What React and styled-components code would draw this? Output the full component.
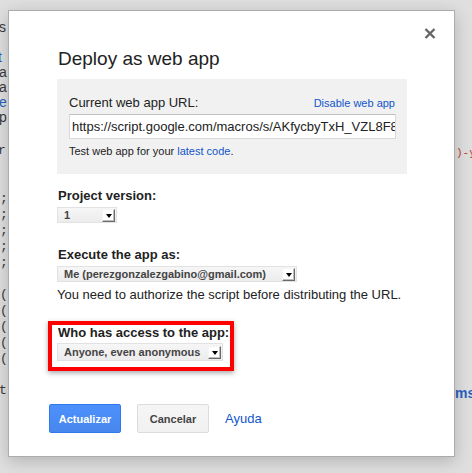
import React from "react";
import styled, { createGlobalStyle } from "styled-components";

const Global = createGlobalStyle`
  html, body { margin: 0; padding: 0; }
  body { background: #dedede; font-family: "Liberation Sans", Arial, sans-serif; }
`;

const Page = styled.div`
  position: relative;
  width: 472px;
  height: 473px;
  overflow: hidden;
  background: #dfdfdf;
`;

const Backdrop = styled.div`
  display: grid;
  grid-template-columns: 12px 1fr 20px;
  height: 100%;
`;

const Strip = styled.div`
  display: flex;
  flex-direction: column;
  padding-top: ${(p) => p.$top}px;
  overflow: hidden;
  white-space: pre;
`;

const Section = styled.div`
  display: flex;
  flex-direction: column;
  margin-top: ${(p) => p.$gap || 0}px;
`;

const Line = styled.div`
  height: ${(p) => (p.$mono ? 16 : 15)}px;
  line-height: ${(p) => (p.$mono ? 16 : 15)}px;
  font-family: ${(p) =>
    p.$mono ? '"Liberation Mono", "DejaVu Sans Mono", monospace' : '"Liberation Sans", Arial, sans-serif'};
  font-size: ${(p) => p.$size || (p.$mono ? 13 : 14)}px;
  font-weight: ${(p) => (p.$bold ? 700 : 400)};
  color: ${(p) => p.$color || "#3a3a3a"};
  margin-left: ${(p) => p.$shift || 0}px;
`;

const Blue = styled.span`
  color: #2a62c0;
`;

const Dialog = styled.div`
  position: absolute;
  left: 8px;
  top: 10px;
  width: 447px;
  height: 447px;
  box-sizing: border-box;
  background: #fff;
  border: 1px solid #acacac;
  box-shadow: 0 4px 16px rgba(0, 0, 0, 0.2);
  padding: 37px 47px 0 48px;
  display: flex;
  flex-direction: column;
  color: #222;
  & > * { flex-shrink: 0; }
`;

const Close = styled.button`
  position: absolute;
  right: 18px;
  top: 16px;
  width: 13px;
  height: 13px;
  padding: 0;
  border: 0;
  background: none;
  display: flex;
  align-items: center;
  justify-content: center;
  cursor: pointer;
`;

const Title = styled.h1`
  margin: 0;
  font-size: 19px;
  line-height: 22px;
  font-weight: 400;
  color: #222;
  padding-left: 1px;
`;

const InfoBox = styled.div`
  margin-top: 9px;
  background: #f1f1f1;
  height: 95px;
  box-sizing: border-box;
  padding: 16px 11px 0 12px;
  display: flex;
  flex-direction: column;
`;

const HeadRow = styled.div`
  display: flex;
  justify-content: space-between;
  align-items: baseline;
  padding-right: 1px;
`;

const Label = styled.div`
  font-size: 13px;
  line-height: 15px;
  color: #222;
`;

const SmallLink = styled.a`
  font-size: 11px;
  color: #15c;
  text-decoration: none;
`;

const UrlInput = styled.div`
  margin-top: 4px;
  height: 25px;
  box-sizing: border-box;
  border: 1px solid #d9d9d9;
  border-top-color: #c0c0c0;
  background: #fff;
  font-size: 13px;
  line-height: 23px;
  padding: 0 2px;
  white-space: nowrap;
  overflow: hidden;
  color: #222;
`;

const Note = styled.div`
  margin-top: 6px;
  font-size: 11px;
  line-height: 13px;
  color: #222;
  a { color: #15c; text-decoration: none; }
`;

const Field = styled.div`
  display: flex;
  flex-direction: column;
  align-items: flex-start;
  margin-top: ${(p) => p.$gap}px;
`;

const FieldLabel = styled.div`
  font-size: 13px;
  line-height: 15px;
  font-weight: 700;
  color: #222;
  padding-left: 1px;
  white-space: nowrap;
`;

const Select = styled.div`
  margin-top: ${(p) => p.$gap || 6}px;
  width: ${(p) => p.$w}px;
  height: ${(p) => p.$h || 16}px;
  box-sizing: border-box;
  border: 1px solid #e2e2e2;
  background: linear-gradient(#f6f6f6, #ececec);
  display: flex;
  align-items: center;
  justify-content: space-between;
  padding: 0 1px 0 6px;
  font-size: 11px;
  font-weight: 700;
  color: #444;
  white-space: nowrap;
`;

const ArrowBox = styled.span`
  width: 13px;
  height: 13px;
  box-sizing: border-box;
  background: #fff;
  border: 1px solid;
  border-color: #f4f4f4 #6a6a6a #6a6a6a #f4f4f4;
  box-shadow: inset -1px -1px 0 #bdbdbd;
  display: flex;
  align-items: center;
  justify-content: center;
  &::after {
    content: "";
    border-left: 3px solid transparent;
    border-right: 3px solid transparent;
    border-top: 4px solid #000;
    margin-top: 1px;
  }
`;

const Help = styled.div`
  margin-top: 5px;
  font-size: 13px;
  line-height: 15px;
  color: #222;
`;

const Highlight = styled.div`
  margin: 19px 0 0 -9px;
  align-self: flex-start;
  box-sizing: border-box;
  border: 4px solid #f00;
  padding: 0 1px 6px 5px;
  box-shadow: 0 2px 5px rgba(0, 0, 0, 0.35);
  display: flex;
  flex-direction: column;
  align-items: flex-start;
`;

const Actions = styled.div`
  margin: 33px 0 0 -8px;
  display: flex;
  align-items: center;
  gap: 16px;
`;

const Button = styled.button`
  min-width: 72px;
  height: 29px;
  box-sizing: border-box;
  padding: 0 8px;
  border-radius: 2px;
  font-family: "Liberation Sans", Arial, sans-serif;
  font-size: 11px;
  font-weight: 700;
  cursor: pointer;
  border: 1px solid ${(p) => (p.$primary ? "#3079ed" : "#dcdcdc")};
  background: ${(p) => (p.$primary ? "linear-gradient(#4d90fe, #4787ed)" : "linear-gradient(#f5f5f5, #f1f1f1)")};
  color: ${(p) => (p.$primary ? "#fff" : "#444")};
`;

const HelpLink = styled.a`
  font-size: 13px;
  color: #15c;
  text-decoration: none;
`;

export default function App() {
  return (
    <>
      <Global />
      <Page>
        <Backdrop>
          <Strip $top={20}>
            <Line $shift={-1}>s</Line>
            <Line> </Line>
            <Line $color="#2a62c0" $shift={-2}>t</Line>
            <Line $shift={-1}>a</Line>
            <Line $shift={-1}>a</Line>
            <Line $color="#2a62c0" $shift={-1}>e</Line>
            <Line $shift={-1}>p</Line>
            <Section $gap={18}>
              <Line $mono $shift={-2}>r:</Line>
              <Line $mono> </Line>
              <Line $mono> </Line>
              <Line $mono>;</Line>
              <Line $mono>;</Line>
              <Line $mono>;</Line>
              <Line $mono>;</Line>
              <Line $mono>;</Line>
              <Line $mono> </Line>
              <Line $mono>(<Blue>'</Blue></Line>
              <Line $mono>(<Blue>'</Blue></Line>
              <Line $mono>(<Blue>'</Blue></Line>
              <Line $mono>(<Blue>'</Blue></Line>
              <Line $mono>(<Blue>|</Blue></Line>
              <Line $mono> </Line>
              <Line $mono $shift={-1}>t</Line>
            </Section>
          </Strip>
          <div />
          <Strip $top={145}>
            <Line $mono $size={11} $color="#c0392b" $shift={4}>)-y</Line>
            <Section $gap={225}>
              <Line $bold $color="#2a62c0" $shift={3}>ms</Line>
            </Section>
          </Strip>
        </Backdrop>

        <Dialog>
          <Close aria-label="Close">
            <svg width="12" height="11" viewBox="0 0 12 11">
              <path d="M1.5 1 L10.5 10 M10.5 1 L1.5 10" stroke="#666" strokeWidth="2.4" strokeLinecap="butt" />
            </svg>
          </Close>
          <Title>Deploy as web app</Title>

          <InfoBox>
            <HeadRow>
              <Label>Current web app URL:</Label>
              <SmallLink href="#">Disable web app</SmallLink>
            </HeadRow>
            <UrlInput>https://script.google.com/macros/s/AKfycbyTxH_VZL8F8oPqW2xyz/exec</UrlInput>
            <Note>
              Test web app for your <a href="#">latest code</a>.
            </Note>
          </InfoBox>

          <Field $gap={14}>
            <FieldLabel>Project version:</FieldLabel>
            <Select $w={60} $gap={4}>
              <span>1</span>
              <ArrowBox />
            </Select>
          </Field>

          <Field $gap={24}>
            <FieldLabel>Execute the app as:</FieldLabel>
            <Select $w={240} $gap={4}>
              <span>Me (perezgonzalezgabino@gmail.com)</span>
              <ArrowBox />
            </Select>
            <Help>You need to authorize the script before distributing the URL.</Help>
          </Field>

          <Highlight>
            <FieldLabel>Who has access to the app:</FieldLabel>
            <Select $w={166} $h={18} $gap={3}>
              <span>Anyone, even anonymous</span>
              <ArrowBox />
            </Select>
          </Highlight>

          <Actions>
            <Button $primary>Actualizar</Button>
            <Button>Cancelar</Button>
            <HelpLink href="#">Ayuda</HelpLink>
          </Actions>
        </Dialog>
      </Page>
    </>
  );
}
